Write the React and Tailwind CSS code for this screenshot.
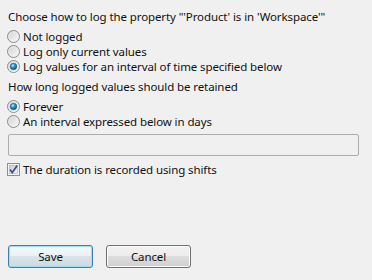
function Radio({ checked }) {
  return (
    <svg width="13" height="13" viewBox="0 0 13 13" className="shrink-0">
      <defs>
        <linearGradient id="radioFill" x1="0" y1="0" x2="1" y2="1">
          <stop offset="0" stopColor="#cfcfcf" />
          <stop offset="1" stopColor="#fbfbfb" />
        </linearGradient>
        <radialGradient id="radioDot" cx="0.4" cy="0.35" r="0.7">
          <stop offset="0" stopColor="#a6ecff" />
          <stop offset="0.45" stopColor="#2b93d4" />
          <stop offset="1" stopColor="#0b3f6e" />
        </radialGradient>
      </defs>
      <circle cx="6.5" cy="6.5" r="6" fill="url(#radioFill)" stroke="#8c8c8c" />
      <circle cx="6.5" cy="6.5" r="4.6" fill="none" stroke="#f4f4f4" strokeOpacity="0.6" />
      {checked && <circle cx="6.5" cy="6.5" r="3.3" fill="url(#radioDot)" stroke="#1c5a8c" strokeWidth="0.6" />}
    </svg>
  );
}

function Checkbox() {
  return (
    <svg width="13" height="13" viewBox="0 0 13 13" className="shrink-0">
      <defs>
        <linearGradient id="cbFill" x1="0" y1="0" x2="1" y2="1">
          <stop offset="0" stopColor="#cbcbcb" />
          <stop offset="1" stopColor="#f7f7f7" />
        </linearGradient>
      </defs>
      <rect x="0.5" y="0.5" width="12" height="12" fill="#f4f4f4" stroke="#8e8f8f" />
      <rect x="2.5" y="2.5" width="8" height="8" fill="url(#cbFill)" stroke="#b0b0b0" strokeWidth="0.6" />
      <path d="M3 6.6 L5.3 9.6 L10.2 2.4" fill="none" stroke="#3c4f8e" strokeWidth="1.7" />
    </svg>
  );
}

function RadioRow({ label, checked }) {
  return (
    <div className="flex items-center h-[15px] gap-[3px]">
      <Radio checked={checked} />
      <span className="block h-[15px]">{label}</span>
    </div>
  );
}

export default function App() {
  return (
    <div
      className="w-[372px] h-[280px] bg-[#f0f0f0] text-[#111] text-[11.5px] tracking-[-0.1px] leading-[15px] pt-[9px] pl-[7px] pr-[13px] flex flex-col"
      style={{ fontFamily: '"Noto Sans", "Liberation Sans", sans-serif' }}
    >
      <div className="h-[15px] pl-[1px]">Choose how to log the property "'Product' is in 'Workspace'"</div>
      <div className="mt-[5px] flex flex-col">
        <RadioRow label="Not logged" />
        <RadioRow label="Log only current values" />
        <RadioRow label="Log values for an interval of time specified below" checked />
      </div>
      <div className="mt-[5px] h-[15px] pl-[1px]">How long logged values should be retained</div>
      <div className="mt-[5px] flex flex-col">
        <RadioRow label="Forever" checked />
        <RadioRow label="An interval expressed below in days" />
      </div>
      <div className="mt-[5px] ml-[1px] h-[22px] border border-[#adadad] rounded-[2px] bg-[#f0f0f0]" />
      <div className="mt-[6px] flex items-center h-[15px] gap-[3px]">
        <Checkbox />
        <span className="block h-[15px]">The duration is recorded using shifts</span>
      </div>
      <div className="mt-[68px] ml-[1px] flex gap-[13px]">
        <button className="w-[85px] h-[23px] rounded-[3px] border border-[#3c7fb1] shadow-[inset_0_0_0_1px_#9fdcf2] bg-[linear-gradient(to_bottom,#f4f8fa_0%,#e9f0f4_50%,#d9e3ea_50%,#cfd9e0_100%)] leading-[15px]">
          Save
        </button>
        <button className="w-[85px] h-[23px] rounded-[3px] border border-[#707070] shadow-[inset_0_0_0_1px_#fcfcfc] bg-[linear-gradient(to_bottom,#f2f2f2_0%,#ebebeb_50%,#dddddd_50%,#cfcfcf_100%)] leading-[15px]">
          Cancel
        </button>
      </div>
    </div>
  );
}
